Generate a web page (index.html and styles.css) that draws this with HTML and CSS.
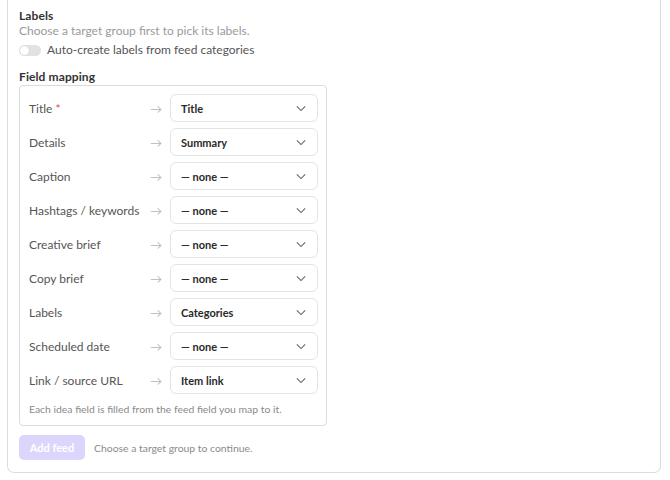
FILE: index.html
```html
<!DOCTYPE html>
<html lang="en">
<head>
    <meta charset="UTF-8">
    <meta name="viewport" content="width=device-width, initial-scale=1.0">
    <title>Add feed</title>
    <link rel="stylesheet" href="styles.css">
</head>
<body>
    <div class="card">
        <section class="section">
            <h3 class="section-title">Labels</h3>
            <p class="hint">Choose a target group first to pick its labels.</p>
            <label class="toggle-row">
                <span class="toggle"><span class="knob"></span></span>
                Auto-create labels from feed categories
            </label>
        </section>

        <section class="section">
            <h3 class="section-title">Field mapping</h3>
            <div class="mapping">
                <div class="map-row">
                    <span class="field-name">Title <span class="req">*</span></span>
                    <span class="arrow">&rarr;</span>
                    <div class="select">Title<svg class="chev" viewBox="0 0 12 8"><path d="M1 1.5l5 5 5-5"/></svg></div>
                </div>
                <div class="map-row">
                    <span class="field-name">Details</span>
                    <span class="arrow">&rarr;</span>
                    <div class="select">Summary<svg class="chev" viewBox="0 0 12 8"><path d="M1 1.5l5 5 5-5"/></svg></div>
                </div>
                <div class="map-row">
                    <span class="field-name">Caption</span>
                    <span class="arrow">&rarr;</span>
                    <div class="select">&mdash; none &mdash;<svg class="chev" viewBox="0 0 12 8"><path d="M1 1.5l5 5 5-5"/></svg></div>
                </div>
                <div class="map-row">
                    <span class="field-name">Hashtags / keywords</span>
                    <span class="arrow">&rarr;</span>
                    <div class="select">&mdash; none &mdash;<svg class="chev" viewBox="0 0 12 8"><path d="M1 1.5l5 5 5-5"/></svg></div>
                </div>
                <div class="map-row">
                    <span class="field-name">Creative brief</span>
                    <span class="arrow">&rarr;</span>
                    <div class="select">&mdash; none &mdash;<svg class="chev" viewBox="0 0 12 8"><path d="M1 1.5l5 5 5-5"/></svg></div>
                </div>
                <div class="map-row">
                    <span class="field-name">Copy brief</span>
                    <span class="arrow">&rarr;</span>
                    <div class="select">&mdash; none &mdash;<svg class="chev" viewBox="0 0 12 8"><path d="M1 1.5l5 5 5-5"/></svg></div>
                </div>
                <div class="map-row">
                    <span class="field-name">Labels</span>
                    <span class="arrow">&rarr;</span>
                    <div class="select">Categories<svg class="chev" viewBox="0 0 12 8"><path d="M1 1.5l5 5 5-5"/></svg></div>
                </div>
                <div class="map-row">
                    <span class="field-name">Scheduled date</span>
                    <span class="arrow">&rarr;</span>
                    <div class="select">&mdash; none &mdash;<svg class="chev" viewBox="0 0 12 8"><path d="M1 1.5l5 5 5-5"/></svg></div>
                </div>
                <div class="map-row">
                    <span class="field-name">Link / source URL</span>
                    <span class="arrow">&rarr;</span>
                    <div class="select">Item link<svg class="chev" viewBox="0 0 12 8"><path d="M1 1.5l5 5 5-5"/></svg></div>
                </div>
                <p class="map-note">Each idea field is filled from the feed field you map to it.</p>
            </div>
        </section>

        <div class="actions">
            <button class="btn-primary" disabled>Add feed</button>
            <span class="action-hint">Choose a target group to continue.</span>
        </div>
    </div>
</body>
</html>
```

FILE: styles.css
```css
* {
    margin: 0;
    padding: 0;
    box-sizing: border-box;
}

body {
    font-family: Lato, "Noto Sans", sans-serif;
    background: #fff;
    color: #2b2b2b;
}

.card {
    margin-left: 7px;
    width: 654px;
    height: 473px;
    border: 1px solid #dcdcdc;
    border-top: none;
    border-radius: 0 0 7px 7px;
    padding: 8px 11px 0;
}

.section {
    margin-bottom: 9px;
}

.section-title {
    font-size: 12px;
    font-weight: 700;
    color: #333;
    line-height: 15px;
    letter-spacing: 0.1px;
}

.hint {
    font-size: 12px;
    color: #9a9a9a;
    line-height: 15px;
}

.toggle-row {
    display: flex;
    align-items: center;
    gap: 6px;
    font-size: 12px;
    color: #555;
    line-height: 20px;
    margin-top: 2px;
}

.toggle {
    width: 22px;
    height: 11px;
    border-radius: 6px;
    background: #e2e2e2;
    position: relative;
}

.knob {
    position: absolute;
    left: 1px;
    top: 1px;
    width: 9px;
    height: 9px;
    border-radius: 50%;
    background: #fff;
    box-shadow: 0 0 1px rgba(0,0,0,0.2);
}

.mapping {
    margin-top: 1px;
    width: 308px;
    border: 1px solid #dcdcdc;
    border-radius: 4px;
    padding: 8px 8px 9px 9px;
    display: flex;
    flex-direction: column;
    gap: 6px;
}

.map-row {
    display: grid;
    grid-template-columns: 1fr 20px 148px;
    align-items: center;
}

.field-name {
    font-size: 12px;
    color: #555;
}

.req {
    color: #e5484d;
}

.arrow {
    color: #b5b5b5;
    font-size: 12px;
}

.select {
    height: 28px;
    border: 1px solid #e4e4e4;
    border-radius: 6px;
    display: flex;
    align-items: center;
    justify-content: space-between;
    padding: 0 11px 0 10px;
    font-size: 11px;
    font-weight: 700;
    color: #2a2a2a;
}

.chev {
    width: 10px;
    height: 7px;
    fill: none;
    stroke: #666;
    stroke-width: 1.3;
}

.map-note {
    font-size: 10.4px;
    color: #8a8a8a;
    line-height: 13px;
    margin-top: 3px;
}

.actions {
    display: flex;
    align-items: center;
    gap: 9px;
    margin-top: 5px;
}

.btn-primary {
    font-family: inherit;
    width: 66px;
    height: 25px;
    border: none;
    border-radius: 5px;
    background: #ddd6fc;
    color: #fff;
    font-size: 11px;
    font-weight: 700;
}

.action-hint {
    font-size: 10.4px;
    color: #8a8a8a;
}
```
